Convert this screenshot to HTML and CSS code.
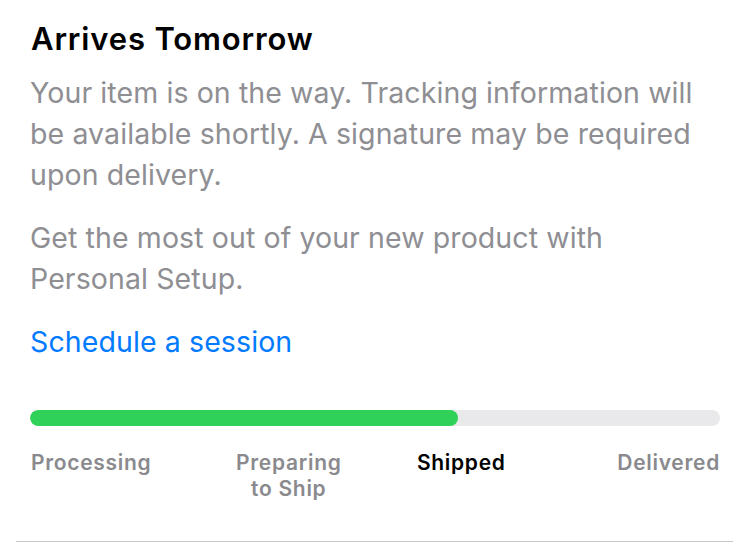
FILE: index.html
```html
<!DOCTYPE html>
<html lang="en">
<head>
    <meta charset="UTF-8">
    <meta name="viewport" content="width=device-width, initial-scale=1.0">
    <title>Order Status</title>
    <link rel="stylesheet" href="styles.css">
</head>
<body>

<div class="card">
    <h1 class="title">Arrives Tomorrow</h1>
    <p class="note">Your item is on the way. Tracking information will be available shortly. A signature may be required upon delivery.</p>
    <p class="note">Get the most out of your new product with Personal Setup.</p>
    <a class="link" href="#">Schedule a session</a>

    <div class="track">
        <div class="track-fill" style="width: 62%;"></div>
    </div>
    <div class="steps">
        <span class="step step-first">Processing</span>
        <span class="step">Preparing<br>to Ship</span>
        <span class="step step-current">Shipped</span>
        <span class="step step-last">Delivered</span>
    </div>
</div>

</body>
</html>
```

FILE: styles.css
```css
body {
    margin: 0;
    padding: 0;
    background-color: #fff;
    font-family: Inter, "Noto Sans", Arial, sans-serif;
}

.card {
    width: 690px;
    margin-left: 16px;
    padding: 20px 13px 39px 14px;
    border-bottom: 1px solid #c8c7cc;
}

.title {
    font-size: 31px;
    line-height: 38px;
    font-weight: 600;
    color: #000;
    margin: 0 0 14px 1px;
    letter-spacing: 0.85px;
}

.note {
    font-size: 28.5px;
    line-height: 41px;
    letter-spacing: 0.1px;
    color: #8e8e93;
    margin: 0 0 22px 0;
}

.link {
    display: block;
    font-size: 28.5px;
    line-height: 41px;
    letter-spacing: 0.1px;
    color: #007aff;
    text-decoration: none;
}

.track {
    margin-top: 48px;
    height: 16px;
    border-radius: 8px;
    background-color: #e9e9eb;
    overflow: hidden;
}

.track-fill {
    height: 100%;
    border-radius: 8px;
    background-color: #30d158;
}

.steps {
    display: grid;
    grid-template-columns: repeat(4, 1fr);
    margin-top: 24px;
    font-size: 21px;
    line-height: 26px;
    letter-spacing: 0.7px;
    font-weight: 600;
    color: #8a8a8e;
}

.step {
    text-align: center;
}

.step-first {
    text-align: left;
    padding-left: 1px;
}

.step-last {
    text-align: right;
}

.step-current {
    color: #000;
}
```
